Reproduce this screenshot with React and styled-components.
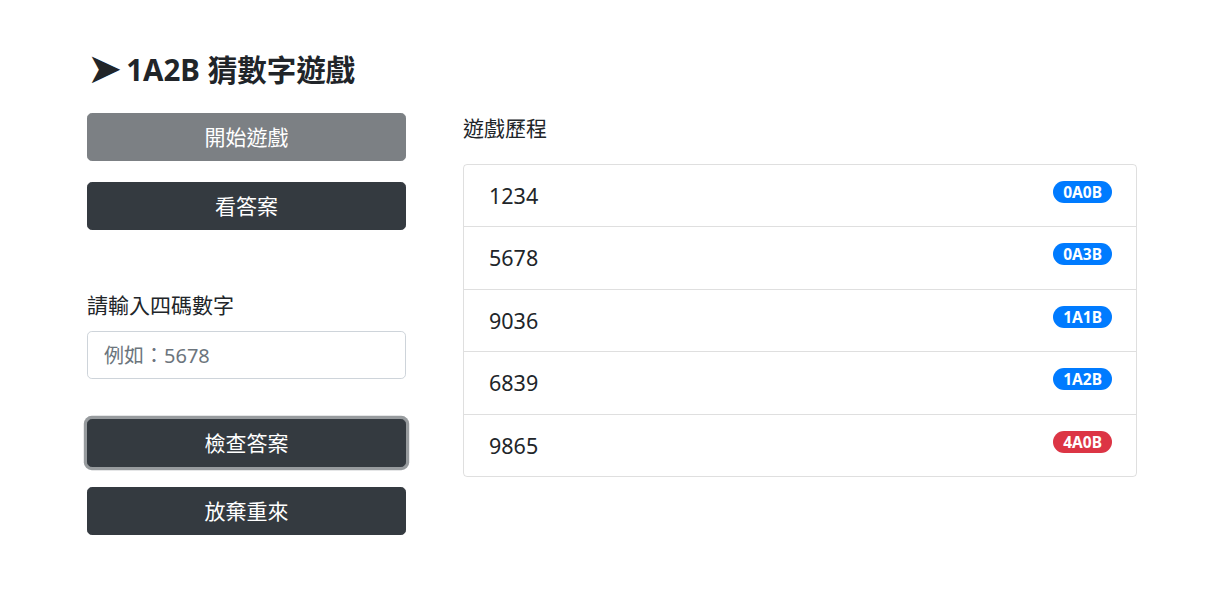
import React from 'react'
import styled, { createGlobalStyle } from 'styled-components'

const history = [
  { guess: '1234', result: '0A0B', win: false },
  { guess: '5678', result: '0A3B', win: false },
  { guess: '9036', result: '1A1B', win: false },
  { guess: '6839', result: '1A2B', win: false },
  { guess: '9865', result: '4A0B', win: true }
]

const App = () => (
  <Page>
    <GlobalStyle />
    <Title><Arrow>➤</Arrow>1A2B 猜數字遊戲</Title>
    <Columns>
      <LeftCol>
        <Button $disabled>開始遊戲</Button>
        <Button $gap={21}>看答案</Button>
        <Label>請輸入四碼數字</Label>
        <Input type='text' placeholder='例如：5678' />
        <Button $gap={40} $focus>檢查答案</Button>
        <Button $gap={20}>放棄重來</Button>
      </LeftCol>
      <RightCol>
        <SectionLabel>遊戲歷程</SectionLabel>
        <HistoryList>
          {history.map((item, index) => (
            <HistoryItem key={index}>
              <span>{item.guess}</span>
              <Badge $danger={item.win}>{item.result}</Badge>
            </HistoryItem>
          ))}
        </HistoryList>
      </RightCol>
    </Columns>
  </Page>
)

const GlobalStyle = createGlobalStyle`
  body {
    margin: 0;
    background: #fff;
    color: #212529;
    font-family: "Noto Sans", "Noto Sans CJK TC", sans-serif;
  }
  * { box-sizing: border-box; }
`

const Page = styled.div`
  padding: 52px 0 60px 87px;
`

const Title = styled.h3`
  margin: 0;
  height: 36px;
  font-size: 29.5px;
  line-height: 36px;
  font-weight: 700;
  color: #212529;
  display: flex;
  align-items: center;
`

const Arrow = styled.span`
  font-family: "DejaVu Sans", sans-serif;
  font-size: 42px;
  line-height: 1;
  margin-right: 4px;
  position: relative;
  top: -1px;
`

const Columns = styled.div`
  display: grid;
  grid-template-columns: 319px 674px;
  column-gap: 57px;
  margin-top: 25px;
`

const LeftCol = styled.div`
  display: flex;
  flex-direction: column;
`

const RightCol = styled.div`
  display: flex;
  flex-direction: column;
`

const Button = styled.button`
  height: 48px;
  margin-top: ${p => p.$gap || 0}px;
  border: 1px solid ${p => p.$disabled ? '#7c8084' : '#343a40'};
  border-radius: 4.8px;
  background: ${p => p.$disabled ? '#7c8084' : '#343a40'};
  color: #fff;
  font-family: inherit;
  font-size: 21px;
  line-height: 30px;
  padding: 0 16px;
  box-shadow: ${p => p.$focus ? '0 0 0 3.2px rgba(82, 88, 93, 0.6)' : 'none'};
`

const Label = styled.label`
  margin-top: 60px;
  font-size: 21px;
  line-height: 30px;
`

const Input = styled.input`
  margin-top: 11px;
  height: 48px;
  border: 1px solid #ced4da;
  border-radius: 4.8px;
  padding: 0 16px;
  font-family: inherit;
  font-size: 20px;
  color: #495057;
  &::placeholder { color: #6c757d; }
`

const SectionLabel = styled.div`
  font-size: 21px;
  line-height: 30px;
  margin-bottom: 21px;
`

const HistoryList = styled.ul`
  list-style: none;
  margin: 0;
  padding: 0;
  border: 1px solid rgba(0, 0, 0, 0.125);
  border-radius: 4px;
`

const HistoryItem = styled.li`
  display: flex;
  justify-content: space-between;
  align-items: flex-start;
  padding: 16px 24px 16px 25px;
  font-size: 21.5px;
  line-height: 29.4px;
  border-bottom: 1px solid rgba(0, 0, 0, 0.125);
  &:last-child { border-bottom: none; }
`

const Badge = styled.span`
  display: inline-block;
  padding: 4px 10px 3px;
  border-radius: 10rem;
  background: ${p => p.$danger ? '#dc3545' : '#007bff'};
  color: #fff;
  font-size: 15.5px;
  font-weight: 700;
  line-height: 15px;
`

export default App
